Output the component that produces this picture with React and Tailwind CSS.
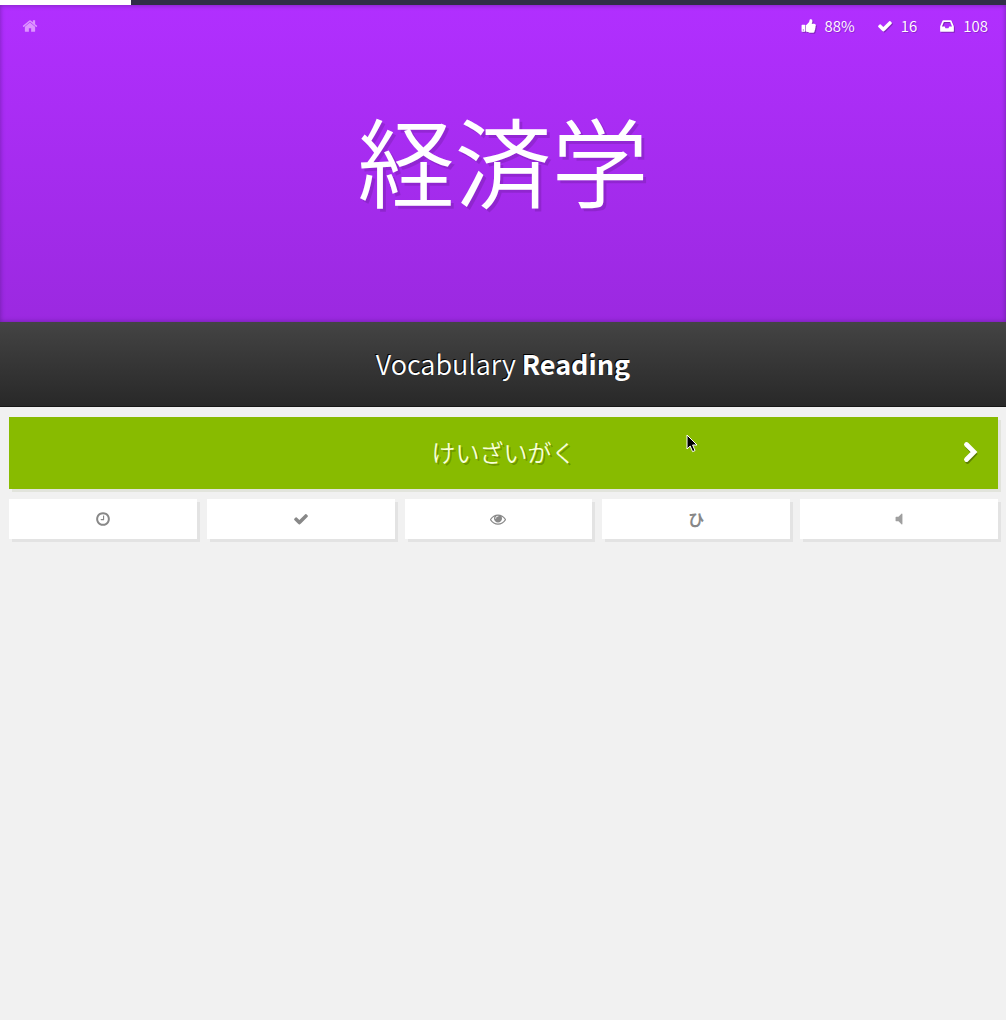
const PATHS = {
  home: "M1472 992v480q0 26-19 45t-45 19h-384v-384h-256v384h-384q-26 0-45-19t-19-45v-480q0-1 .5-3t.5-3l575-474 575 474q1 2 1 6zm223-69l-62 74q-8 9-21 11h-3q-13 0-21-7l-692-577-692 577q-12 8-24 7-13-2-21-11l-62-74q-8-10-7-23.5t11-21.5l719-599q32-26 76-26t76 26l244 204v-195q0-14 9-23t23-9h192q14 0 23 9t9 23v408l219 182q10 8 11 21.5t-7 23.5z",
  check: "M1671 566q0 40-28 68l-724 724-136 136q-28 28-68 28t-68-28l-136-136-362-362q-28-28-28-68t28-68l136-136q28-28 68-28t68 28l294 295 656-657q28-28 68-28t68 28l136 136q28 28 28 68z",
  thumb: "M320 1344q0-26-19-45t-45-19q-27 0-45.5 19t-18.5 45q0 27 18.5 45.5t45.5 18.5q26 0 45-18.5t19-45.5zm160-512v640q0 26-19 45t-45 19h-288q-26 0-45-19t-19-45v-640q0-26 19-45t45-19h288q26 0 45 19t19 45zm1184 0q0 86-55 149 15 44 15 76 3 76-43 137 17 56 0 117-15 57-54 94 9 112-49 181-64 76-197 78h-129q-66 0-144-15.5t-121.5-29-120.5-39.5q-123-43-158-44-26-1-45-19.5t-19-44.5v-641q0-25 18-43.5t43-20.5q24-2 76-59t101-121q68-87 101-120 18-18 31-48t17.5-48.5 13.5-60.5q7-39 12.5-61t19.5-52 34-50q19-19 45-19 46 0 82.5 10.5t60 26 40 40.5 24 45 12 50 5 45 .5 39q0 38-9.5 76t-19 60-27.5 56q-3 6-10 18t-11 22-8 24h277q78 0 135 57t57 135z",
  inbox: "M1151 960h316q-1-3-2.5-8t-2.5-8l-212-496h-708l-212 496q-1 2-2.5 8t-2.5 8h316l95 192h320zm513 30v482q0 26-19 45t-45 19h-1408q-26 0-45-19t-19-45v-482q0-62 25-123l238-552q10-25 36.5-42t52.5-17h832q26 0 52.5 17t36.5 42l238 552q25 61 25 123z",
  clock: "M1024 544v448q0 14-9 23t-23 9h-320q-14 0-23-9t-9-23v-64q0-14 9-23t23-9h224v-352q0-14 9-23t23-9h64q14 0 23 9t9 23zm416 352q0-148-73-273t-198-198-273-73-273 73-198 198-73 273 73 273 198 198 273 73 273-73 198-198 73-273zm224 0q0 209-103 385.5t-279.5 279.5-385.5 103-385.5-103-279.5-279.5-103-385.5 103-385.5 279.5-279.5 385.5-103 385.5 103 279.5 279.5 103 385.5z",
  eye: "M1664 960q-152-236-381-353 61 104 61 225 0 185-131.5 316.5t-316.5 131.5-316.5-131.5-131.5-316.5q0-121 61-225-229 117-381 353 133 205 333.5 326.5t434.5 121.5 434.5-121.5 333.5-326.5zm-720-384q0-20-14-34t-34-14q-125 0-214.5 89.5t-89.5 214.5q0 20 14 34t34 14 34-14 14-34q0-86 61-147t147-61q20 0 34-14t14-34zm848 384q0 34-20 69-140 230-376.5 368.5t-499.5 138.5-499.5-139-376.5-368q-20-35-20-69t20-69q140-229 376.5-368t499.5-139 499.5 139 376.5 368q20 35 20 69z",
  volume: "M1280 352v1088q0 26-19 45t-45 19-45-19l-333-333h-262q-26 0-45-19t-19-45v-384q0-26 19-45t45-19h262l333-333q19-19 45-19t45 19 19 45z",
};

function Icon({ name, className }) {
  return (
    <svg viewBox="0 0 1792 1792" fill="currentColor" aria-hidden="true" className={className}>
      <path d={PATHS[name]} />
    </svg>
  );
}

function Stat({ icon, value }) {
  return (
    <li className="flex items-center gap-2">
      <Icon name={icon} className="size-4 drop-shadow-[1px_1px_0_rgba(0,0,0,0.25)]" />
      <span>{value}</span>
    </li>
  );
}

const TOOLS = [
  { label: "Last items", content: <Icon name="clock" className="size-4" /> },
  { label: "Wrap up", content: <Icon name="check" className="size-4" /> },
  { label: "Item info", content: <Icon name="eye" className="size-4" /> },
  { label: "Kana chart", content: <span className="text-base leading-4 font-bold">ひ</span> },
  { label: "Audio", content: <Icon name="volume" className="size-4 opacity-80" /> },
];

export default function App() {
  return (
    <div className="min-h-screen bg-[#f1f1f1] font-['Noto_Sans_CJK_JP',sans-serif]">
      <div className="h-[5px] bg-[#312e47]">
        <div className="h-full w-[13%] bg-white" />
      </div>

      <header className="bg-linear-to-b from-[#b12fff] to-[#9b29e0] pb-[88px] text-white shadow-[inset_0_0_5px_rgba(60,20,100,0.5)]">
        <nav className="flex items-center justify-between pt-2 pr-[18px] pl-[22px]">
          <a href="#home" aria-label="Home" className="text-[#dd94ff]">
            <Icon name="home" className="size-4" />
          </a>
          <ul className="flex gap-[22px] text-[15px] leading-[26px] font-[350] [text-shadow:1px_1px_0_rgba(0,0,0,0.2)]">
            <Stat icon="thumb" value="88%" />
            <Stat icon="check" value="16" />
            <Stat icon="inbox" value="108" />
          </ul>
        </nav>
        <h1
          lang="ja"
          className="mt-[42px] text-center text-[97px] leading-[153px] font-[350] [text-shadow:3px_3px_0_rgba(0,0,0,0.12)]"
        >
          経済学
        </h1>
      </header>

      <h2 className="bg-linear-to-b from-[#444] to-[#282828] pb-0.5 text-center text-[27px] leading-[83px] font-[350] text-white shadow-[inset_0_-1px_0_#171717] [text-shadow:-1px_-1px_0_#000]">
        Vocabulary <strong className="font-bold">Reading</strong>
      </h2>

      <main className="pt-2.5 pr-2 pl-[9px]">
        <form className="relative shadow-[3px_3px_0_#e2e4dc]" onSubmit={(e) => e.preventDefault()}>
          <input
            type="text"
            lang="ja"
            aria-label="Answer"
            defaultValue="けいざいがく"
            className="block h-[72px] w-full bg-[#88bb00] px-12 pb-1 text-center text-[24px] font-[350] text-[#f8ffd8] outline-none [text-shadow:2px_2px_0_rgba(0,0,0,0.2)]"
          />
          <button
            type="submit"
            aria-label="Next"
            className="absolute inset-y-0 right-0 flex w-14 items-center justify-center text-white"
          >
            <svg viewBox="0 0 18 24" fill="none" aria-hidden="true" className="h-6 w-[18px]">
              <path d="M6.500 5.500L13.500 13L6.500 20.500" stroke="#5d8000" strokeWidth="4.6" strokeLinecap="round" />
              <path d="M5.500 3.500L13 11L5.500 18.500" stroke="currentColor" strokeWidth="4.8" strokeLinecap="round" />
            </svg>
          </button>
          <svg
            viewBox="0 0 12 19"
            aria-hidden="true"
            className="pointer-events-none absolute top-[17px] left-[68.5%] h-[19px] w-3"
          >
            <path
              d="M1 1v14l3.2-3 2.4 5.6 2.4-1L6.600 11H11z"
              fill="#000"
              stroke="#fff"
              strokeWidth="1"
            />
          </svg>
        </form>

        <ul className="mt-2.5 grid grid-cols-5">
          {TOOLS.map((tool) => (
            <li key={tool.label} className="pr-2.5 last:pr-0">
              <button
                type="button"
                aria-label={tool.label}
                className="flex h-10 w-full items-center justify-center bg-white text-[#888] shadow-[3px_3px_0_#e3e3e3]"
              >
                {tool.content}
              </button>
            </li>
          ))}
        </ul>
      </main>
    </div>
  );
}
